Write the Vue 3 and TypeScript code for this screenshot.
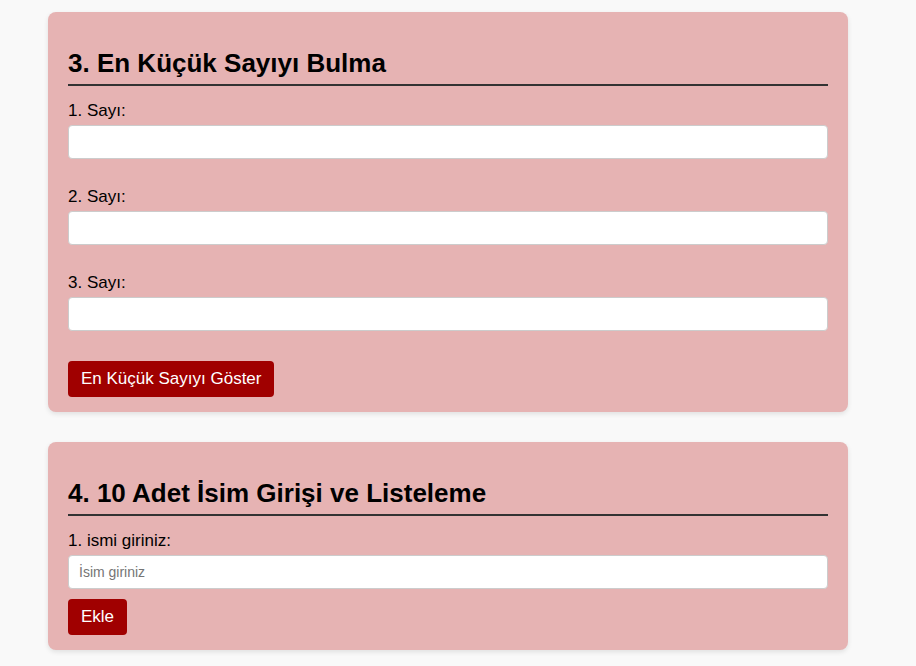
<script setup lang="ts">
import { computed, ref } from 'vue'

const numbers = ref<string[]>(['', '', ''])
const smallest = ref<number | null>(null)
const name = ref('')
const names = ref<string[]>([])
const nextIndex = computed(() => names.value.length + 1)

function showSmallest(): void {
  const values = numbers.value.map((n) => String(n)).filter((n) => n !== '').map(Number)
  smallest.value = values.length === 3 ? Math.min(...values) : null
}

function addName(): void {
  const value = name.value.trim()
  if (!value || names.value.length >= 10) return
  names.value.push(value)
  name.value = ''
}
</script>

<template>
  <main class="page">
    <section class="card">
      <h2>3. En Küçük Sayıyı Bulma</h2>
      <form @submit.prevent="showSmallest">
        <div v-for="(_, i) in numbers" :key="i" class="field">
          <label :for="`number-${i}`">{{ i + 1 }}. Sayı:</label>
          <input :id="`number-${i}`" v-model="numbers[i]" type="number" />
        </div>
        <button type="submit">En Küçük Sayıyı Göster</button>
      </form>
      <p v-if="smallest !== null">{{ smallest }}</p>
    </section>

    <section class="card">
      <h2>4. 10 Adet İsim Girişi ve Listeleme</h2>
      <form @submit.prevent="addName">
        <label for="name">{{ nextIndex }}. ismi giriniz:</label>
        <input id="name" v-model="name" type="text" placeholder="İsim giriniz" />
        <button type="submit">Ekle</button>
      </form>
      <ol v-if="names.length">
        <li v-for="(item, i) in names" :key="i">{{ item }}</li>
      </ol>
    </section>
  </main>
</template>

<style>
body {
  margin: 0;
  background: #f9f9f9;
}
</style>

<style scoped>
.page {
  box-sizing: border-box;
  max-width: 916px;
  padding: 12px 68px 16px 48px;
  font-family: Arial, "Liberation Sans", sans-serif;
  font-size: 17px;
  line-height: 28px;
  color: #000;
}

.card {
  padding: 30px 20px 15px;
  border-radius: 8px;
  background: #e6b3b3;
  box-shadow: 0 2px 5px rgba(0, 0, 0, 0.1);
}

.card + .card {
  margin-top: 30px;
}

h2 {
  margin: 0 0 11px;
  border-bottom: 2px solid #333;
  font-size: 26px;
  line-height: 42px;
}

label {
  display: block;
}

input {
  display: block;
  box-sizing: border-box;
  width: 100%;
  height: 34px;
  margin: 0 0 10px;
  padding: 8px 10px;
  border: 1px solid #ccc;
  border-radius: 4px;
  background: #fff;
  font-family: inherit;
  font-size: 14px;
}

.field {
  margin-bottom: 24px;
}

.field + button {
  margin-top: 30px;
}

button {
  display: block;
  height: 36px;
  padding: 0 13px;
  border: 0;
  border-radius: 4px;
  background: #a00000;
  color: #fff;
  font-family: inherit;
  font-size: 17px;
  cursor: pointer;
}
</style>
